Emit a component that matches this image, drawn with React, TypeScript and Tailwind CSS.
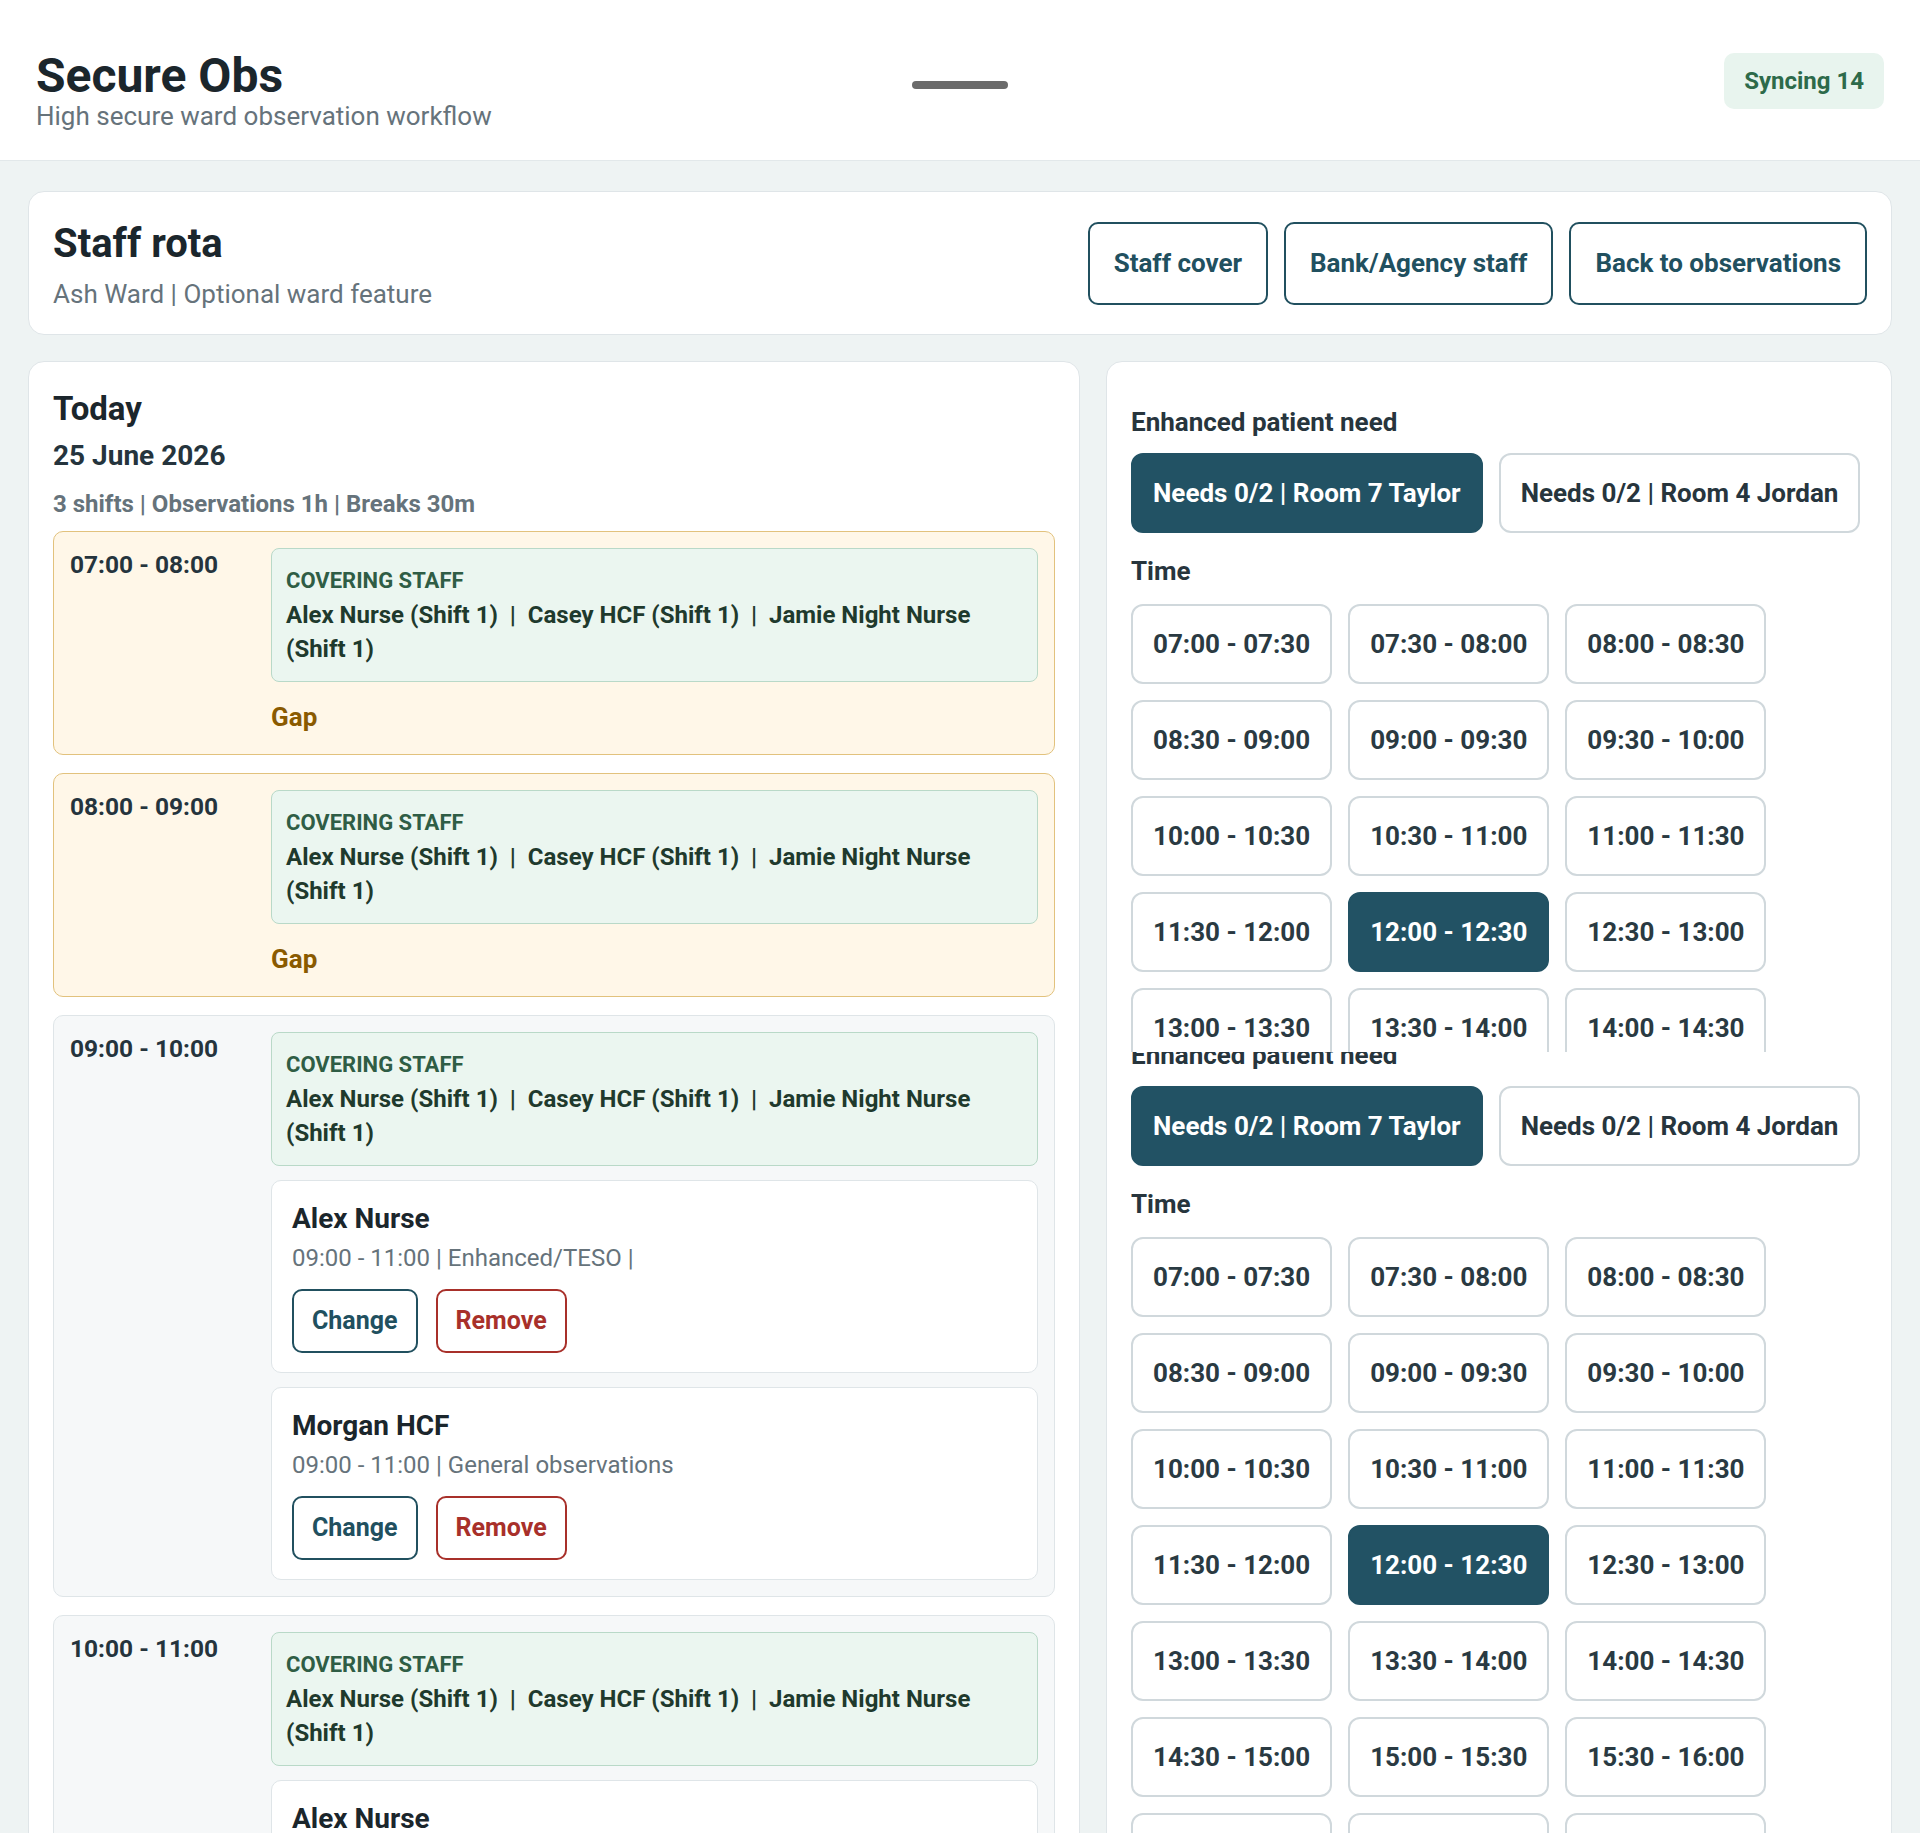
import React from "react";

const names = ["Alex Nurse (Shift 1)", "Casey HCF (Shift 1)", "Jamie Night Nurse (Shift 1)"];

function buildSlots() {
  const out: string[] = [];
  for (let m = 7 * 60; m < 19 * 60; m += 30) {
    const f = (v: number) =>
      String(Math.floor(v / 60)).padStart(2, "0") + ":" + String(v % 60).padStart(2, "0");
    out.push(f(m) + " - " + f(m + 30));
  }
  return out;
}
const slots = buildSlots();

function CoveringStaff() {
  return (
    <div className="rounded-lg border border-[#b9d9c8] bg-[#ebf6f0] px-[14px] pt-[18px] pb-[15px]">
      <div className="text-[22px] font-bold leading-[28px] text-[#2f5d45]">COVERING STAFF</div>
      <div className="mt-[3px] text-[24px] font-bold leading-[34px] text-[#1f3a2d]">
        {names.map((n, i) => (
          <React.Fragment key={n}>
            {i > 0 && "\u00a0 |\u00a0 "}
            {n}
          </React.Fragment>
        ))}
      </div>
    </div>
  );
}

function StaffCard({ name, detail }: { name: string; detail: string }) {
  return (
    <div className="rounded-[10px] border border-[#dfe5e8] bg-white px-5 pt-5 pb-[19px]">
      <div className="text-[28px] font-bold leading-[36px] text-[#1b262c]">{name}</div>
      <div className="mt-[5px] text-[24px] leading-[32px] text-[#66737b]">{detail}</div>
      <div className="mt-[15px] flex gap-[18px]">
        <button className="flex h-[64px] items-center rounded-[10px] border-2 border-[#21505f] px-[18px] text-[25px] font-bold text-[#21505f]">
          Change
        </button>
        <button className="flex h-[64px] items-center rounded-[10px] border-2 border-[#a8302a] px-[18px] text-[25px] font-bold text-[#a8302a]">
          Remove
        </button>
      </div>
    </div>
  );
}

interface Slot {
  time: string;
  gap?: boolean;
  staff?: { name: string; detail: string }[];
}

const rota: Slot[] = [
  { time: "07:00 - 08:00", gap: true },
  { time: "08:00 - 09:00", gap: true },
  {
    time: "09:00 - 10:00",
    staff: [
      { name: "Alex Nurse", detail: "09:00 - 11:00 | Enhanced/TESO |" },
      { name: "Morgan HCF", detail: "09:00 - 11:00 | General observations" },
    ],
  },
  {
    time: "10:00 - 11:00",
    staff: [
      { name: "Alex Nurse", detail: "09:00 - 11:00 | Enhanced/TESO |" },
      { name: "Morgan HCF", detail: "09:00 - 11:00 | General observations" },
    ],
  },
];

function RotaSlot({ slot }: { slot: Slot }) {
  return (
    <div
      className={
        slot.gap
          ? "flex gap-4 rounded-[10px] border border-[#e2c27d] bg-[#fff7e8] p-4"
          : "flex gap-4 rounded-[10px] border border-[#dfe5e8] bg-[#f6f8f9] p-4"
      }
    >
      <div className="w-[185px] shrink-0 text-[24.5px] font-bold leading-[34px] text-[#25343d]">
        {slot.time}
      </div>
      <div className="flex min-w-0 flex-1 flex-col gap-[14px]">
        <CoveringStaff />
        {slot.gap && (
          <div className="text-[26px] font-bold leading-[42px] text-[#8a5a00]">Gap</div>
        )}
        {slot.staff?.map((s) => (
          <StaffCard key={s.name} name={s.name} detail={s.detail} />
        ))}
      </div>
    </div>
  );
}

function NeedPicker() {
  return (
    <div>
      <div className="text-[26px] font-bold leading-[35px] text-[#27353d]">Enhanced patient need</div>
      <div className="mt-[13px] flex gap-4">
        <button className="flex h-[80px] items-center rounded-xl border-2 border-[#225264] bg-[#225264] px-[20px] text-[26px] font-bold text-white">
          Needs 0/2 | Room 7 Taylor
        </button>
        <button className="flex h-[80px] items-center rounded-xl border-2 border-[#d0d8dc] bg-white px-[20px] text-[26px] font-bold text-[#27353d]">
          Needs 0/2 | Room 4 Jordan
        </button>
      </div>
      <div className="mt-[21px] text-[26px] font-bold leading-[35px] text-[#27353d]">Time</div>
      <div className="mt-[15px] flex flex-wrap gap-4">
        {slots.map((t) => (
          <button
            key={t}
            className={
              t === "12:00 - 12:30"
                ? "flex h-[80px] items-center rounded-xl border-2 border-[#225264] bg-[#225264] px-5 text-[26px] font-bold text-white"
                : "flex h-[80px] items-center rounded-xl border-2 border-[#d0d8dc] bg-white px-5 text-[26px] font-bold text-[#2a3a42]"
            }
          >
            {t}
          </button>
        ))}
      </div>
    </div>
  );
}

export default function App() {
  return (
    <div className="h-[1833px] overflow-hidden bg-[#eef3f3] font-['Roboto',sans-serif] text-[#1b262c]">
      <header className="grid grid-cols-[1fr_auto_1fr] items-start border-b border-[#e2e8ea] bg-white px-9 pt-[52px] pb-[28px]">
        <div>
          <h1 className="text-[48px] font-bold leading-[48px] text-[#1b262c]">Secure Obs</h1>
          <p className="text-[26px] leading-[32px] text-[#66737b]">High secure ward observation workflow</p>
        </div>
        <div className="mt-[29px] h-2 w-24 rounded-full bg-[#6b6b6b]" />
        <div className="mt-px flex h-14 items-center justify-self-end rounded-[10px] bg-[#e8f4ee] px-5 text-[24px] font-bold text-[#2d6a4a]">
          Syncing 14
        </div>
      </header>

      <main className="flex flex-col gap-[26px] px-7 pt-[30px]">
        <section className="flex items-center justify-between rounded-2xl border border-[#dfe5e8] bg-white p-6">
          <div>
            <h2 className="text-[40px] font-bold leading-[56px] text-[#1b262c]">Staff rota</h2>
            <p className="mt-1.5 text-[26px] leading-[32px] text-[#66737b]">Ash Ward | Optional ward feature</p>
          </div>
          <div className="flex gap-4">
            {["Staff cover", "Bank/Agency staff", "Back to observations"].map((b) => (
              <button
                key={b}
                className="flex h-[83px] items-center rounded-[10px] border-2 border-[#21505f] px-6 text-[26px] font-bold text-[#21505f]"
              >
                {b}
              </button>
            ))}
          </div>
        </section>

        <div className="grid grid-cols-[1052px_1fr] items-start gap-[26px]">
          <section className="rounded-2xl border border-[#dfe5e8] bg-white px-6 pt-[27px] pb-6">
            <h2 className="text-[33px] font-bold leading-[40px] text-[#1b262c]">Today</h2>
            <div className="mt-[9px] text-[28px] font-bold leading-[36px] text-[#25343d]">25 June 2026</div>
            <div className="mt-[15px] text-[24px] font-bold leading-[30px] text-[#66737b]">
              3 shifts | Observations 1h | Breaks 30m
            </div>
            <div className="mt-3 flex flex-col gap-[18px]">
              {rota.map((s) => (
                <RotaSlot key={s.time} slot={s} />
              ))}
            </div>
          </section>

          <section className="rounded-2xl border border-[#dfe5e8] bg-white px-6 pb-6">
            <div className="h-[690px] overflow-hidden pt-[43px]">
              <NeedPicker />
            </div>
            <div className="overflow-hidden">
              <div className="-mt-[14px]">
                <NeedPicker />
              </div>
            </div>
          </section>
        </div>
      </main>
    </div>
  );
}
